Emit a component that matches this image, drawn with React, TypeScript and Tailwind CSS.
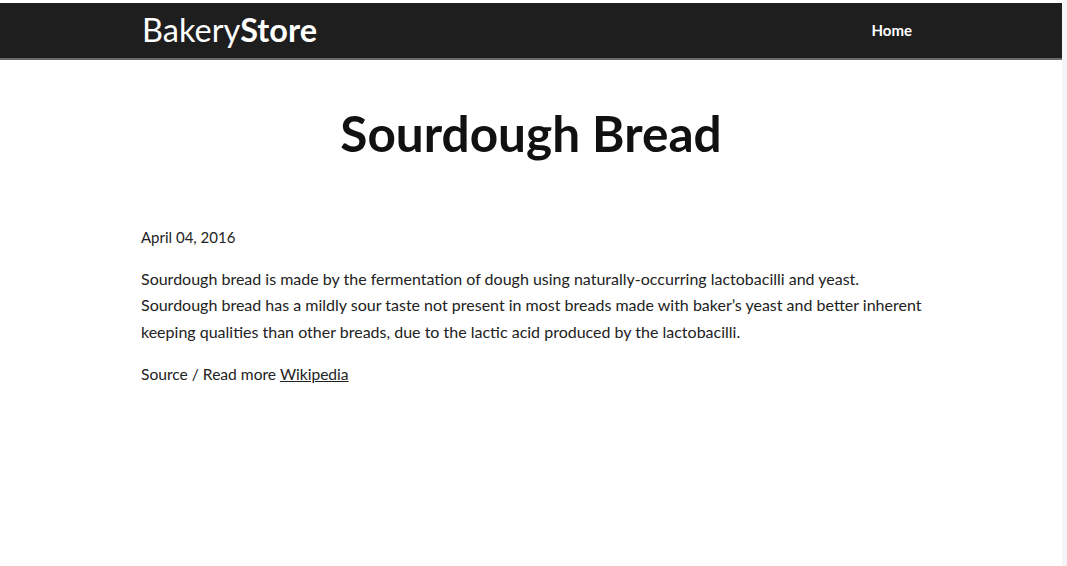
import React from "react";

export default function App() {
  return (
    <div className="flex min-h-[566px] w-full bg-white" style={{ fontFamily: "Lato, 'Open Sans', sans-serif" }}>
      <div className="w-[1062px] shrink-0">
        <div className="h-[3px] bg-white" />
        <header className="flex h-[57px] items-center justify-between border-b-2 border-[#6b6b6b] bg-[#1e1e1e] pl-[142px] pr-[150px]">
          <div className="text-[32.5px] leading-none text-white">
            Bakery<span className="font-bold">Store</span>
          </div>
          <nav className="text-[15px] font-bold text-white">Home</nav>
        </header>
        <main className="px-[141px]">
          <h1 className="mt-[44px] text-center text-[49.5px] font-bold leading-[58px] text-[#111]">Sourdough Bread</h1>
          <p className="mt-[64px] text-[15px] text-[#222]">April 04, 2016</p>
          <p className="-mr-[60px] mt-[17px] text-[16px] leading-[26.5px] text-[#222]">
            Sourdough bread is made by the fermentation of dough using naturally-occurring lactobacilli and yeast.
            <br />
            Sourdough bread has a mildly sour taste not present in most breads made with baker’s yeast and better inherent
            <br />
            keeping qualities than other breads, due to the lactic acid produced by the lactobacilli.
          </p>
          <p className="mt-[18px] text-[15.6px] text-[#222]">
            Source / Read more <a className="underline" href="#">Wikipedia</a>
          </p>
        </main>
      </div>
      <div className="flex-1 bg-[#f4f5f9]" />
    </div>
  );
}
